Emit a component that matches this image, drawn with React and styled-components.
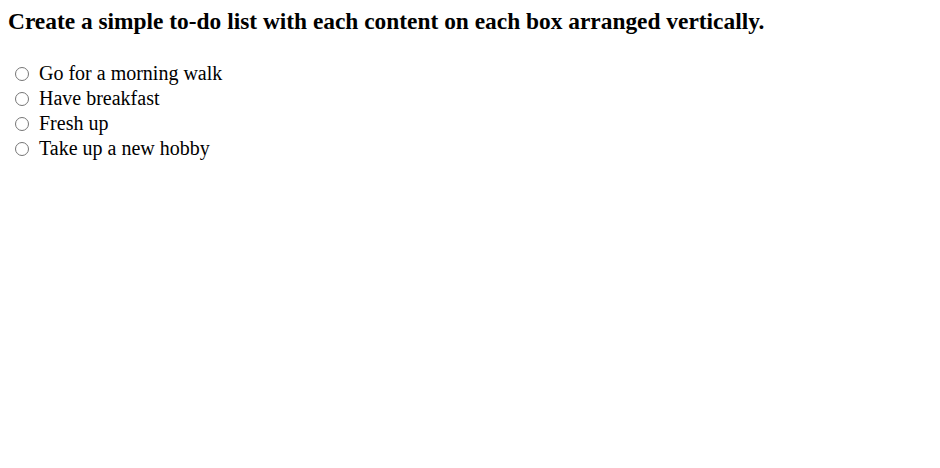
import { createGlobalStyle, styled } from "styled-components";

const GlobalStyle = createGlobalStyle`
    body {
        margin: 8px;
        font-family: "Liberation Serif", "Times New Roman", serif;
        color: #000;
        background: #fff;
    }
`;

const Title = styled.h3`
    font-size: 23.4px;
    font-weight: 700;
    margin: 0 0 26px;
`;

const List = styled.div`
    display: flex;
    flex-direction: column;
`;

const Item = styled.label`
    display: flex;
    align-items: center;
    height: 25px;
    font-size: 20px;
`;

const Radio = styled.input`
    appearance: none;
    box-sizing: border-box;
    width: 14px;
    height: 14px;
    margin: 0 10px 0 7px;
    border: 1px solid #767676;
    border-radius: 50%;
    background: #fff;

    &:checked {
        border: 4px solid #0075ff;
    }
`;

const tasks = ["Go for a morning walk", "Have breakfast", "Fresh up", "Take up a new hobby"];

const App = () => (
    <>
        <GlobalStyle />
        <Title>Create a simple to-do list with each content on each box arranged vertically.</Title>
        <List>
            {tasks.map((task) => (
                <Item key={task}>
                    <Radio type="radio" name="todo" />
                    {task}
                </Item>
            ))}
        </List>
    </>
);

export default App;
